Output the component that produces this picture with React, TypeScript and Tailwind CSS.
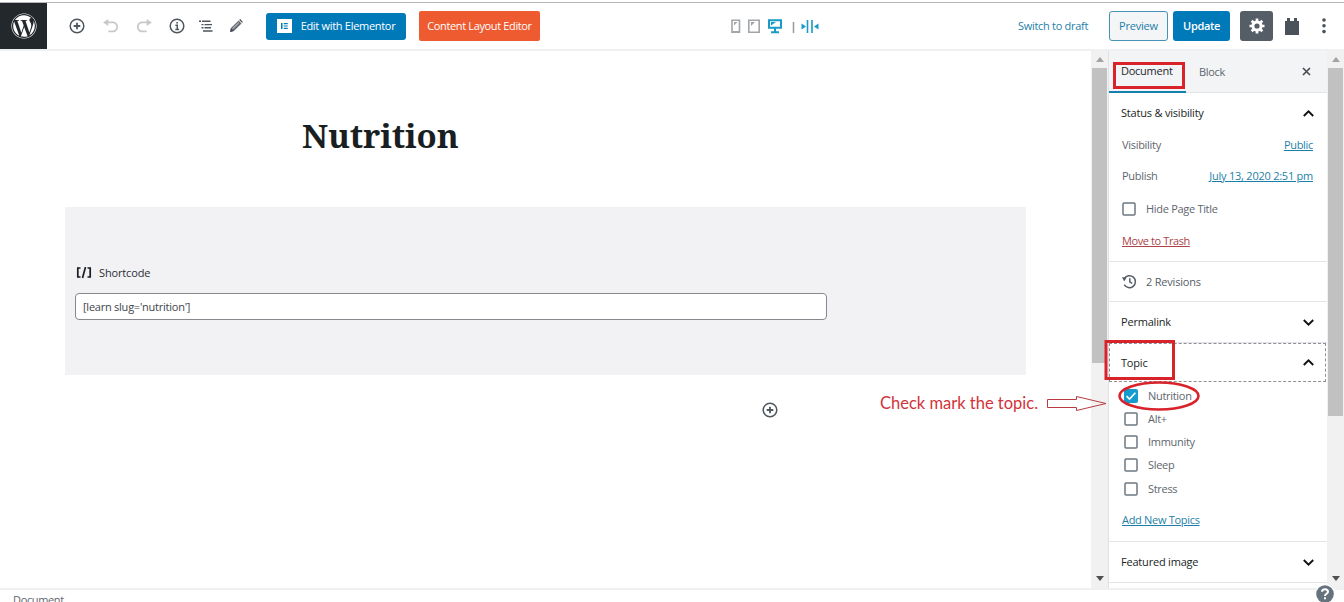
import type { ReactNode } from "react";
import { FaWordpress } from "react-icons/fa";

function InsertIcon() {
  return (
    <svg className="size-4 shrink-0" viewBox="0 0 16 16" fill="none" stroke="#4f565e">
      <circle cx="8" cy="8" r="6.8" strokeWidth="1.5" />
      <path d="M8 4.7v6.6M4.7 8h6.6" strokeWidth="1.8" />
    </svg>
  );
}

function Chevron({ up = false }: { up?: boolean }) {
  return (
    <svg className="h-[7px] w-[11px]" viewBox="0 0 11 7" fill="none" stroke="#111" strokeWidth="1.9">
      <path d={up ? "M.8 6L5.5 1.4L10.2 6" : "M.8 1L5.5 5.6L10.2 1"} />
    </svg>
  );
}

function PanelTitle({ title, open = false }: { title: string; open?: boolean }) {
  return (
    <div className="flex h-10 w-[218px] shrink-0 items-center justify-between pr-[13px] pl-3 font-medium tracking-[-0.2px] text-[#191e23]">
      <span>{title}</span>
      <Chevron up={open} />
    </div>
  );
}

function Checkbox({ checked = false }: { checked?: boolean }) {
  return checked ? (
    <span className="flex size-[14px] items-center justify-center rounded-[2px] bg-[#149cce]">
      <svg className="size-[12px]" viewBox="0 0 12 12" fill="none" stroke="#fff" strokeWidth="1.6">
        <path d="M1.6 6.2L4.5 9L10.4 2.8" />
      </svg>
    </span>
  ) : (
    <span className="flex size-[14px]">
      <svg className="size-[14px]" viewBox="0 0 14 14" fill="#fff" stroke="#6c7781" strokeWidth="1.5">
        <rect x="1" y="1" width="12" height="12" rx="1" />
      </svg>
    </span>
  );
}

function Scrollbar({ thumb }: { thumb: ReactNode }) {
  return (
    <div className="flex w-[17px] shrink-0 flex-col items-center bg-[#f1f1f1]">
      <div className="flex h-[17px] shrink-0 items-center">
        <svg className="h-[5px] w-2" viewBox="0 0 8 5"><path d="M4 0L8 5H0z" fill="#a3a3a3" /></svg>
      </div>
      {thumb}
      <div className="mt-auto flex h-[19px] shrink-0 items-center">
        <svg className="h-[5px] w-2" viewBox="0 0 8 5"><path d="M0 0H8L4 5z" fill="#505050" /></svg>
      </div>
    </div>
  );
}

const topics = [
  { name: "Nutrition", checked: true },
  { name: "Alt+", checked: false },
  { name: "Immunity", checked: false },
  { name: "Sleep", checked: false },
  { name: "Stress", checked: false },
];

function Header() {
  return (
    <header className="flex h-[49px] shrink-0 items-center border-t border-b-2 border-t-[#b5b7ba] border-b-[#eff0f1]">
      <div className="flex h-full w-[47px] items-center justify-center bg-[#23282d]">
        <FaWordpress className="size-[26px] text-white" />
      </div>
      <div className="ml-[22px] flex items-center gap-[17px]">
        <InsertIcon />
        <svg className="ml-px h-4 w-4" viewBox="1 2 18 16" fill="#c7c9cc"><path d="M12 5H7V2L1 6l6 4V7h5c2.2 0 4 1.8 4 4s-1.8 4-4 4H7v2h5c3.3 0 6-2.7 6-6s-2.7-6-6-6z" /></svg>
        <svg className="h-4 w-4" viewBox="1 2 18 16" fill="#c7c9cc"><path d="M8 5h5V2l6 4-6 4V7H8c-2.2 0-4 1.8-4 4s1.8 4 4 4h5v2H8c-3.3 0-6-2.7-6-6s2.7-6 6-6z" /></svg>
        <svg className="size-4" viewBox="0 0 16 16" fill="none" stroke="#4f565e">
          <circle cx="8" cy="8" r="6.8" strokeWidth="1.5" />
          <path d="M6.4 7.3H8.3V11.3M6.3 11.5h3.8M7.3 4.8h1.7" strokeWidth="1.5" />
        </svg>
        <svg className="-ml-[3px] h-3 w-[14px]" viewBox="0 0 14 12" fill="none" stroke="#4f565e" strokeWidth="1.4">
          <path d="M0 1.3h2M3 1.3h8.500M2.500 4.600h2M5.500 4.600H13M2.500 7.800h2M5.500 7.800h6.500M4 11h9.500" />
        </svg>
        <svg className="-ml-px h-[14px] w-[14px]" viewBox="0 0 14 14">
          <path d="M1 13l1-3.9L9.600 1.500l2.900 2.900L4.900 12z" fill="#656b72" />
          <path d="M10.200.9l.9-.8 2.800 2.800-.8.900zM1 13l1-3.900 2.900 2.900z" fill="#444a50" />
          <path d="M3.500 9.900L9.800 3.700" stroke="#fff" strokeWidth=".8" />
        </svg>
      </div>
      <div className="ml-[23px] flex h-[27px] w-[140px] items-center justify-center gap-[9px] rounded-[3px] bg-[#0079b8] font-medium tracking-[-0.3px] text-white">
        <svg className="size-[15px]" viewBox="0 0 15 15">
          <path d="M0 0h15v14H0z" fill="#fff" />
          <path d="M4 4h1.500v6H4zM6.700 4h4v1.200h-4zM6.700 6.400h4v1.200h-4zM6.700 8.800h4V10h-4z" fill="#0079b8" />
        </svg>
        <span>Edit with Elementor</span>
      </div>
      <div className="ml-[13px] flex h-[30px] w-[121px] items-center justify-center rounded-[2px] bg-[#ee5b30] font-medium tracking-[-0.36px] text-white">
        Content Layout Editor
      </div>
      <svg className="ml-[191px] h-[15px] w-[88px]" viewBox="0 0 88 15" fill="none">
        <g stroke="#a2a6aa" strokeWidth="1.6">
          <path d="M1 1.300h7.500v12H1zM1 12.700h7.500M17.800 1.300h10.400v12H17.800z" />
        </g>
        <path d="M3 3h3.500L3 6.500zM20 3h4l-4 4z" fill="#a2a6aa" />
        <path d="M38 1.300h12v7.500H38zM44 9v4M40 13.200h8" stroke="#189bc7" strokeWidth="2" />
        <path d="M40 3h5l-5 3.500z" fill="#189bc7" />
        <path d="M62.500 3v11" stroke="#9b9b9b" strokeWidth="1.5" />
        <path d="M76.500 1v13M81 1v13" stroke="#189bc7" strokeWidth="1.6" />
        <path d="M70.500 4.500l4.500 3-4.500 3zM87.500 4.500l-4.500 3 4.500 3z" fill="#189bc7" />
      </svg>
      <div className="ml-auto flex items-center">
        <span className="mr-[21px] tracking-[-0.3px] text-[#1d7fa8]">Switch to draft</span>
        <div className="flex h-[30px] w-[59px] items-center justify-center rounded-[3px] border border-[#4594b6] bg-[#f3f5f6] tracking-[-0.2px] text-[#1d7fa8]">Preview</div>
        <div className="ml-[5px] flex h-[30px] w-[57px] items-center justify-center rounded-[3px] bg-[#0079b8] font-semibold tracking-[-0.36px] text-white">Update</div>
        <div className="ml-[10px] flex h-[30px] w-[33px] items-center justify-center rounded-[3px] bg-[#555d66]">
          <svg className="size-[16px]" viewBox="-8 -8 16 16">
            <circle r="4.1" fill="none" stroke="#fff" strokeWidth="3" />
            <path d="M0-7.500V-4M0 7.500V4M-7.500 0H-4M7.500 0H4M-5.300-5.300L-3-3M5.300 5.300L3 3M-5.300 5.300L-3 3M5.300-5.300L3-3" stroke="#fff" strokeWidth="2.7" />
          </svg>
        </div>
        <svg className="ml-3 h-[17px] w-[14px]" viewBox="0 0 14 17" fill="#4b525a"><path d="M0 3h2V0h3v3h4V0h3v3h2v14H0z" /></svg>
        <svg className="mr-[18px] ml-[23px] h-4 w-1" viewBox="0 0 4 16" fill="#4b525a"><circle cx="2" cy="2" r="1.8" /><circle cx="2" cy="7.8" r="1.8" /><circle cx="2" cy="13.6" r="1.8" /></svg>
      </div>
    </header>
  );
}

function Editor() {
  return (
    <main className="flex min-w-0 flex-1 flex-col">
      <h1 className="mt-[62px] ml-[302px] h-[46px] font-['Noto_Serif','DejaVu_Serif',serif] text-[33px] leading-[46px] font-bold tracking-[-0.1px] text-[#191e23]">Nutrition</h1>
      <section className="mt-[48px] ml-[65px] flex h-[168px] w-[961px] flex-col bg-[#f2f2f5] pl-[10px]">
        <div className="mt-[58px] flex h-4 items-center gap-[7px] pl-px font-medium tracking-[-0.15px] text-[#2b2f34]">
          <svg className="h-3 w-4" viewBox="0 0 16 12" fill="none" stroke="#191e23" strokeWidth="1.7">
            <path d="M4.500 1H1.800v9h2.700M11.500 1h2.700v9h-2.700M9.500 0L6.500 11" />
          </svg>
          <span>Shortcode</span>
        </div>
        <div className="mt-[12px] flex h-[27px] w-[752px] items-center rounded-[4px] border border-[#85888d] bg-white pl-[7px] tracking-[-0.24px] text-[#40454b]">[learn slug='nutrition']</div>
      </section>
      <div className="mt-[27px] ml-[762px]"><InsertIcon /></div>
    </main>
  );
}

function Sidebar() {
  return (
    <aside className="flex w-[219px] shrink-0 flex-col overflow-hidden border-l border-[#dfe1e4] tracking-[-0.3px] text-[#5f666e]">
      <div className="flex h-[42px] shrink-0 items-center border-b border-[#e2e4e7] bg-[#f3f4f5]">
        <div className="flex h-[42px] w-[77px] items-center border-b-2 border-[#1580ad] pl-3 font-medium tracking-[-0.25px] text-[#23282d]">Document</div>
        <span className="ml-[13px]">Block</span>
        <svg className="mr-4 ml-auto size-[9px]" viewBox="0 0 9 9" fill="none" stroke="#444a50" strokeWidth="1.6"><path d="M1 1l7 7M8 1L1 8" /></svg>
      </div>
      <section className="flex h-[169px] shrink-0 flex-col border-b border-[#e2e4e7]">
        <PanelTitle title="Status &amp; visibility" open />
        <div className="flex h-6 items-center justify-between pr-[14px] pl-[13px]">
          <span>Visibility</span><a className="text-[#1d7fa8] underline">Public</a>
        </div>
        <div className="mt-[7px] flex h-6 items-center justify-between pr-[14px] pl-[13px]">
          <span>Publish</span><a className="tracking-[-0.24px] text-[#1d7fa8] underline">July 13, 2020 2:51 pm</a>
        </div>
        <div className="mt-[9px] flex h-6 items-center gap-[10px] pl-[13px]">
          <Checkbox /><span>Hide Page Title</span>
        </div>
        <a className="mt-2 flex h-6 items-center pl-[13px] tracking-[-0.4px] text-[#ad4249] underline">Move to Trash</a>
      </section>
      <section className="flex h-10 shrink-0 items-center gap-[9px] border-b border-[#e2e4e7] pl-[13px] text-[#555d66]">
        <svg className="h-[15px] w-[15px]" viewBox="0 0 15 15" fill="none" stroke="#555d66" strokeWidth="1.5">
          <path d="M2.300 4.500A6 6 0 1 1 2.200 10.700M7.800 4.200v3.600l2.400 1.500" />
          <path d="M0 3.200l4.700.400-2.500 3.800z" fill="#555d66" stroke="none" />
        </svg>
        <span className="tracking-[-0.2px]">2 Revisions</span>
      </section>
      <section className="h-[41px] shrink-0 border-b border-[#e2e4e7]"><PanelTitle title="Permalink" /></section>
      <section className="flex h-[199px] shrink-0 flex-col border-b border-[#e2e4e7]">
        <div className="flex h-[39px] w-[217px] shrink-0 flex-col justify-center outline-1 -outline-offset-1 outline-dashed outline-[#8d9196]">
          <PanelTitle title="Topic" open />
        </div>
        <div className="mt-[2px] flex flex-col pl-[15px]">
          {topics.map((topic) => (
            <div key={topic.name} className="flex h-[23.25px] items-center gap-[10px]">
              <Checkbox checked={topic.checked} /><span>{topic.name}</span>
            </div>
          ))}
        </div>
        <a className="mt-2 flex h-6 items-center pl-[13px] text-[#1d7fa8] underline">Add New Topics</a>
      </section>
      <section className="h-[41px] shrink-0 border-b border-[#e2e4e7]"><PanelTitle title="Featured image" /></section>
    </aside>
  );
}

function Annotations() {
  return (
    <div className="pointer-events-none absolute inset-0">
      <svg className="absolute inset-0 h-[602px] w-[1344px]" viewBox="0 0 1344 602" fill="none" stroke="#d8232b">
        <path d="M1114.500 63.500h69v24h-69zM1106 341.500h67.500v37H1106z" strokeWidth="3" />
        <ellipse cx="1159" cy="396" rx="39.500" ry="13.500" strokeWidth="2.6" />
        <path d="M1047.500 399.500h29v-3l29.500 7-29.500 7v-3h-29z" stroke="#b93a40" strokeWidth="1" />
      </svg>
      <span className="absolute top-[393px] left-[880px] font-[Lato,sans-serif] text-[16.5px] leading-[20px] whitespace-nowrap text-[#d2333a]">Check mark the topic.</span>
      <svg className="absolute top-[584px] left-[1315px] size-[20px]" viewBox="0 0 20 20">
        <circle cx="10" cy="10" r="10" fill="#fff" /><circle cx="10" cy="10" r="8.8" fill="#66727e" />
        <path d="M7 7.800C7 4.200 13 4.300 13 7.700C13 9.800 10 9.800 10 12M10 13.200v2" stroke="#fff" strokeWidth="2" fill="none" />
      </svg>
    </div>
  );
}

export default function App() {
  return (
    <div className="relative flex h-[602px] w-[1344px] flex-col overflow-hidden bg-white pt-[2px] font-['Open_Sans',sans-serif] text-[11px] leading-4">
      <Header />
      <div className="flex h-[537px] shrink-0">
        <Editor />
        <Scrollbar thumb={<div className="h-[295px] w-[15px] bg-[#c1c1c1]" />} />
        <Sidebar />
        <Scrollbar thumb={<div className="h-[348px] w-[15px] bg-[#c1c1c1]" />} />
      </div>
      <footer className="h-[14px] shrink-0 border-t-2 border-[#eff0f1] pt-[2px] pl-[13px] tracking-[-0.35px] text-[#5f666e]">Document</footer>
      <Annotations />
    </div>
  );
}
